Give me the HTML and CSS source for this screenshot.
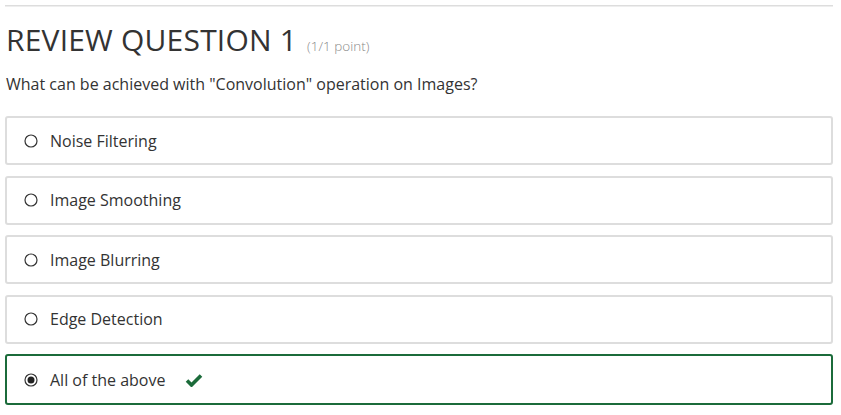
FILE: index.html
```html
<!DOCTYPE html>
<html>
<head>
<meta charset="utf-8">
<link rel="stylesheet" href="styles.css">
</head>
<body>
<div class="page">
  <div class="rule"></div>
  <h2 class="title">REVIEW QUESTION 1 <span class="points">(1/1 point)</span></h2>
  <p class="question">What can be achieved with "Convolution" operation on Images?</p>
  <div class="options">
    <label class="option">
      <svg class="radio" width="14" height="14" viewBox="0 0 14 14"><circle cx="7" cy="7" r="6" fill="#fff" stroke="#333" stroke-width="1.2"/></svg>
      <span class="label">Noise Filtering</span>
    </label>
    <label class="option">
      <svg class="radio" width="14" height="14" viewBox="0 0 14 14"><circle cx="7" cy="7" r="6" fill="#fff" stroke="#333" stroke-width="1.2"/></svg>
      <span class="label">Image Smoothing</span>
    </label>
    <label class="option">
      <svg class="radio" width="14" height="14" viewBox="0 0 14 14"><circle cx="7" cy="7" r="6" fill="#fff" stroke="#333" stroke-width="1.2"/></svg>
      <span class="label">Image Blurring</span>
    </label>
    <label class="option">
      <svg class="radio" width="14" height="14" viewBox="0 0 14 14"><circle cx="7" cy="7" r="6" fill="#fff" stroke="#333" stroke-width="1.2"/></svg>
      <span class="label">Edge Detection</span>
    </label>
    <label class="option correct">
      <svg class="radio" width="14" height="14" viewBox="0 0 14 14"><circle cx="7" cy="7" r="6" fill="#fff" stroke="#333" stroke-width="1.2"/><circle cx="7" cy="7" r="3.5" fill="#222"/></svg>
      <span class="label">All of the above</span>
      <svg class="check" width="18" height="14" viewBox="0 0 18 14"><path d="M2 7.5 L6.5 12 L16 2.5" fill="none" stroke="#1b6b3a" stroke-width="3.6" stroke-linecap="butt" stroke-linejoin="miter"/></svg>
    </label>
  </div>
</div>
</body>
</html>
```

FILE: styles.css
```css
html, body {
  margin: 0;
  padding: 0;
  background: #fff;
}
body {
  font-family: "Open Sans", "Noto Sans", sans-serif;
  color: #333;
}
.page {
  padding: 5px 8px 0 5px;
}
.rule {
  height: 1px;
  background: #ddd;
  border-bottom: 1px solid #eee;
}
.title {
  margin: 15px 0 0 1px;
  font-size: 30px;
  font-weight: 400;
  line-height: 36px;
  color: #333;
  letter-spacing: 0.2px;
}
.points {
  font-size: 13.5px;
  font-weight: 300;
  line-height: 1;
  color: #8a8a8a;
  letter-spacing: 0;
  margin-left: 2px;
}
.question {
  margin: 15px 0 0 1px;
  font-size: 16px;
  line-height: 22px;
  color: #333;
}
.options {
  margin-top: 21px;
  display: flex;
  flex-direction: column;
  gap: 10.5px;
}
.option {
  display: flex;
  align-items: center;
  height: 45px;
  border: 2px solid #ddd;
  border-radius: 3px;
  padding: 0 0 0 17px;
}
.option.correct {
  border-color: #1b6b3a;
  height: 47px;
}
.radio {
  flex: none;
  margin-right: 12px;
}
.label {
  font-size: 16px;
  color: #333;
}
.check {
  margin-left: 20px;
  flex: none;
}
```
